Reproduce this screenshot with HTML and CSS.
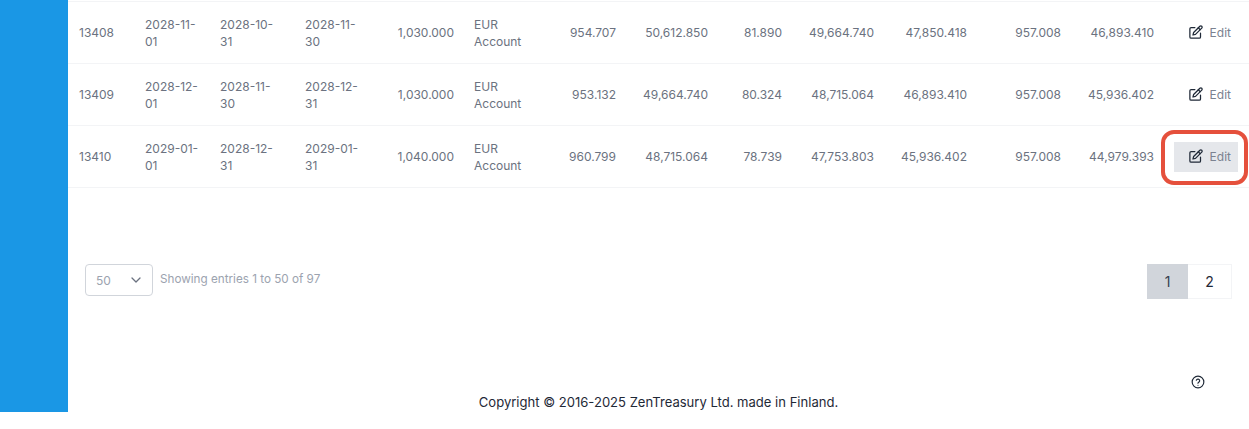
FILE: index.html
```html
<!DOCTYPE html>
<html lang="en">
<head>
    <meta charset="UTF-8">
    <title>Loan schedule</title>
    <link rel="stylesheet" href="styles.css">
</head>
<body>
    <div class="shell">
        <aside class="sidebar"></aside>
        <main class="content">
            <table class="schedule">
                <colgroup>
                    <col class="c-id"><col class="c-date"><col class="c-date2"><col class="c-date3"><col class="c-amount">
                    <col class="c-account"><col class="c-n1"><col class="c-n2"><col class="c-n3"><col class="c-n4">
                    <col class="c-n5"><col class="c-n6"><col class="c-n5"><col>
                </colgroup>
                <tbody>
                    <tr>
                        <td class="first">13408</td>
                        <td>2028-11-01</td>
                        <td>2028-10-31</td>
                        <td>2028-11-30</td>
                        <td class="num">1,030.000</td>
                        <td>EUR Account</td>
                        <td class="num">954.707</td>
                        <td class="num">50,612.850</td>
                        <td class="num">81.890</td>
                        <td class="num">49,664.740</td>
                        <td class="num">47,850.418</td>
                        <td class="num">957.008</td>
                        <td class="num">46,893.410</td>
                        <td class="action">
                            <a class="edit-btn">
                                <svg class="edit-icon" viewBox="0 0 24 24"><path d="M11 4H5a2 2 0 0 0-2 2v13a2 2 0 0 0 2 2h13a2 2 0 0 0 2-2v-6"/><path d="M8 16l1-4L19 2a2.1 2.1 0 0 1 3 3L12 15z"/><path d="M16.5 4.5l3 3"/></svg>
                                Edit
                            </a>
                        </td>
                    </tr>
                    <tr>
                        <td class="first">13409</td>
                        <td>2028-12-01</td>
                        <td>2028-11-30</td>
                        <td>2028-12-31</td>
                        <td class="num">1,030.000</td>
                        <td>EUR Account</td>
                        <td class="num">953.132</td>
                        <td class="num">49,664.740</td>
                        <td class="num">80.324</td>
                        <td class="num">48,715.064</td>
                        <td class="num">46,893.410</td>
                        <td class="num">957.008</td>
                        <td class="num">45,936.402</td>
                        <td class="action">
                            <a class="edit-btn">
                                <svg class="edit-icon" viewBox="0 0 24 24"><path d="M11 4H5a2 2 0 0 0-2 2v13a2 2 0 0 0 2 2h13a2 2 0 0 0 2-2v-6"/><path d="M8 16l1-4L19 2a2.1 2.1 0 0 1 3 3L12 15z"/><path d="M16.5 4.5l3 3"/></svg>
                                Edit
                            </a>
                        </td>
                    </tr>
                    <tr>
                        <td class="first">13410</td>
                        <td>2029-01-01</td>
                        <td>2028-12-31</td>
                        <td>2029-01-31</td>
                        <td class="num">1,040.000</td>
                        <td>EUR Account</td>
                        <td class="num">960.799</td>
                        <td class="num">48,715.064</td>
                        <td class="num">78.739</td>
                        <td class="num">47,753.803</td>
                        <td class="num">45,936.402</td>
                        <td class="num">957.008</td>
                        <td class="num">44,979.393</td>
                        <td class="action">
                            <a class="edit-btn active">
                                <svg class="edit-icon" viewBox="0 0 24 24"><path d="M11 4H5a2 2 0 0 0-2 2v13a2 2 0 0 0 2 2h13a2 2 0 0 0 2-2v-6"/><path d="M8 16l1-4L19 2a2.1 2.1 0 0 1 3 3L12 15z"/><path d="M16.5 4.5l3 3"/></svg>
                                Edit
                            </a>
                        </td>
                    </tr>
                </tbody>
            </table>

            <div class="table-footer">
                <div class="entries">
                    <div class="page-size">
                        <span>50</span>
                        <svg class="chevron" viewBox="0 0 12 12"><path d="M2 4l4 4 4-4"/></svg>
                    </div>
                    <span class="entries-text">Showing entries 1 to 50 of 97</span>
                </div>
                <div class="pagination">
                    <a class="page current">1</a>
                    <a class="page">2</a>
                </div>
            </div>

            <div class="help-row">
                <svg class="help-icon" viewBox="0 0 24 24"><circle cx="12" cy="12" r="10"/><path d="M9.1 9a3 3 0 0 1 5.8 1c0 2-3 2.6-3 4"/><path d="M12 17.5h.01"/></svg>
            </div>
        </main>
    </div>
    <footer class="copyright">Copyright © 2016-2025 ZenTreasury Ltd. made in Finland.</footer>
</body>
</html>
```
FILE: styles.css
```css
html, body {
    height: 100%;
}

body {
    margin: 0;
    background: #ffffff;
    font-family: Inter, "Liberation Sans", sans-serif;
    overflow: hidden;
}

.shell {
    display: flex;
    height: 412px;
}

.sidebar {
    flex: 0 0 68px;
    background: #1a97e5;
}

.content {
    flex: 1;
    min-width: 0;
    display: flex;
    flex-direction: column;
    padding-top: 1px;
}

.schedule {
    width: 100%;
    table-layout: fixed;
    border-collapse: collapse;
    font-size: 12px;
    line-height: 17px;
    color: #6b7280;
}

.c-id { width: 67px; }
.c-date { width: 75px; }
.c-date2 { width: 85px; }
.c-date3 { width: 75px; }
.c-amount { width: 94px; }
.c-account { width: 76px; }
.c-n1 { width: 86px; }
.c-n2 { width: 92px; }
.c-n3 { width: 74px; }
.c-n4 { width: 92px; }
.c-n5 { width: 93px; }
.c-n6 { width: 94px; }

.schedule td {
    height: 61px;
    padding: 0 10px;
    border-top: 1px solid #f3f4f6;
    border-bottom: 1px solid #f3f4f6;
}

.schedule td.first {
    padding-left: 11px;
}

.schedule td.num {
    text-align: right;
}

.schedule td.action {
    padding: 0 11px 0 10px;
}

.edit-btn {
    position: relative;
    display: flex;
    align-items: center;
    justify-content: flex-end;
    gap: 7px;
    height: 30px;
    padding-right: 7px;
    color: #7b8290;
}

.edit-btn.active {
    background: #e5e7eb;
}

/* red marker drawn around the button in the screenshot */
.edit-btn.active::after {
    content: "";
    position: absolute;
    top: -12px;
    bottom: -13px;
    left: -13px;
    right: -10px;
    border: 4px solid #e5503c;
    border-radius: 13px;
}

.edit-icon {
    width: 15px;
    height: 15px;
    fill: none;
    stroke: #1f2937;
    stroke-width: 2;
    stroke-linecap: round;
    stroke-linejoin: round;
}

.table-footer {
    display: flex;
    justify-content: space-between;
    align-items: flex-start;
    margin-top: 76px;
    padding: 0 17px;
}

.entries {
    display: flex;
    align-items: center;
    gap: 7px;
}

.page-size {
    box-sizing: border-box;
    width: 68px;
    height: 32px;
    display: flex;
    align-items: center;
    justify-content: space-between;
    padding: 0 10px;
    border: 1px solid #d1d5db;
    border-radius: 4px;
    font-size: 12px;
    color: #9ca3af;
}

.chevron {
    width: 12px;
    height: 12px;
    fill: none;
    stroke: #6b7280;
    stroke-width: 1.3;
    stroke-linecap: round;
    stroke-linejoin: round;
}

.entries-text {
    padding-bottom: 2px;
    font-size: 11.7px;
    color: #9ca3af;
}

.pagination {
    display: flex;
    border: 1px solid #f3f4f6;
    border-left: none;
}

.page {
    width: 41px;
    height: 33px;
    display: flex;
    align-items: center;
    justify-content: center;
    font-size: 14px;
    color: #1f2937;
}

.page + .page {
    width: 43px;
}

.page.current {
    height: 35px;
    margin: -1px 0;
    background: #d1d5db;
    color: #374151;
}

.help-row {
    display: flex;
    justify-content: flex-end;
    margin-top: 76px;
    padding-right: 44px;
}

.help-icon {
    width: 14px;
    height: 14px;
    fill: none;
    stroke: #1f2937;
    stroke-width: 2;
    stroke-linecap: round;
    stroke-linejoin: round;
}

.copyright {
    position: absolute;
    top: 394px;
    left: 68px;
    right: 0;
    text-align: center;
    font-size: 13.05px;
    line-height: 16px;
    color: #1f2937;
}
```
